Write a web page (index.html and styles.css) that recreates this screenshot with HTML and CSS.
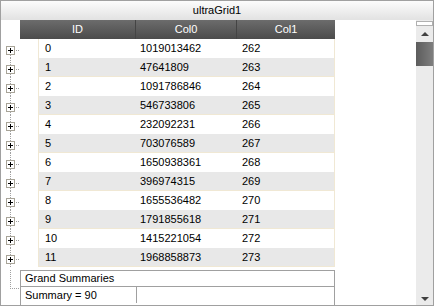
FILE: index.html
```html
<!DOCTYPE html>
<html lang="en">
<head>
    <meta charset="UTF-8">
    <title>ultraGrid1</title>
    <link rel="stylesheet" href="styles.css">
</head>
<body>

<div class="grid">
    <div class="caption">ultraGrid1</div>
    <div class="grid-body">
        <div class="grid-main">
            <div class="header-row">
                <div class="tree-blank"></div>
                <div class="hcell col-id">ID</div>
                <div class="hcell col-0">Col0</div>
                <div class="hcell col-1">Col1</div>
            </div>
            <div class="rows" id="rows">
                <!-- rows are added by the script below -->
            </div>
            <div class="summary-area">
                <svg class="tree" width="19" height="37" viewBox="0 0 19 37">
                    <line x1="9.5" y1="0" x2="9.5" y2="19" stroke="#a0a0a0" stroke-dasharray="1 1"/>
                    <line x1="11" y1="18.5" x2="19" y2="18.5" stroke="#a0a0a0" stroke-dasharray="1 1"/>
                </svg>
                <div class="summary-box">
                    <div class="summary-title">Grand Summaries</div>
                    <div class="summary-line">
                        <div class="summary-cell first">Summary = 90</div>
                        <div class="summary-cell"></div>
                    </div>
                </div>
            </div>
        </div>
        <div class="scrollbar">
            <div class="scroll-grip"></div>
            <div class="scroll-btn"><span class="arrow-up"></span></div>
            <div class="scroll-thumb"></div>
            <div class="scroll-track"></div>
            <div class="scroll-btn"><span class="arrow-down"></span></div>
        </div>
    </div>
</div>

<script>
    // Sample data shown in the grid
    const data = [
        [0, 1019013462, 262],
        [1, 47641809, 263],
        [2, 1091786846, 264],
        [3, 546733806, 265],
        [4, 232092231, 266],
        [5, 703076589, 267],
        [6, 1650938361, 268],
        [7, 396974315, 269],
        [8, 1655536482, 270],
        [9, 1791855618, 271],
        [10, 1415221054, 272],
        [11, 1968858873, 273]
    ];

    function treeIcon(first) {
        return `
            <svg class="tree" width="19" height="19" viewBox="0 0 19 19">
                ${first ? '' : '<line x1="9.5" y1="0" x2="9.5" y2="7" stroke="#a0a0a0" stroke-dasharray="1 1"/>'}
                <line x1="9.5" y1="16" x2="9.5" y2="19" stroke="#a0a0a0" stroke-dasharray="1 1"/>
                <line x1="15" y1="11.5" x2="19" y2="11.5" stroke="#a0a0a0" stroke-dasharray="1 1"/>
                <rect x="5.5" y="7.5" width="8" height="8" fill="#fff" stroke="#a8a498"/>
                <line x1="7" y1="11.5" x2="12" y2="11.5" stroke="#000"/>
                <line x1="9.5" y1="9" x2="9.5" y2="14" stroke="#000"/>
            </svg>`;
    }

    const rows = document.getElementById('rows');
    data.forEach((item, i) => {
        const row = document.createElement('div');
        row.className = 'row' + (i % 2 ? ' alt' : '');
        row.innerHTML = `
            ${treeIcon(i === 0)}
            <div class="row-gap"></div>
            <div class="cells">
                <div class="cell col-id">${item[0]}</div>
                <div class="cell col-0">${item[1]}</div>
                <div class="cell col-1">${item[2]}</div>
            </div>
        `;
        rows.appendChild(row);
    });
</script>

</body>
</html>
```

FILE: styles.css
```css
body {
    margin: 0;
    padding: 0;
    background-color: #fff;
    font-family: "Liberation Sans", Arial, sans-serif;
    font-size: 11px;
}
.grid {
    width: 434px;
    height: 306px;
    box-sizing: border-box;
    border: 1px solid #a0a0a0;
    display: flex;
    flex-direction: column;
    overflow: hidden;
}
.caption {
    height: 20px;
    line-height: 19px;
    text-align: center;
    color: #000;
    background: linear-gradient(#fcfcfc, #e2e2e2);
}
.grid-body {
    flex: 1;
    display: flex;
}
.grid-main {
    flex: 1;
    display: flex;
    flex-direction: column;
}
.header-row {
    display: flex;
    height: 19px;
}
.tree-blank {
    width: 19px;
}
.hcell {
    line-height: 19px;
    text-align: center;
    color: #fff;
    background: linear-gradient(#6c6c6c, #4b4b4b);
    box-sizing: border-box;
}
.header-row .col-id {
    width: 116px;
    border-right: 1px solid #444;
}
.header-row .col-0 {
    width: 101px;
    border-right: 1px solid #444;
}
.header-row .col-1 {
    width: 98px;
}
.rows {
    height: 228px;
}
.row {
    display: flex;
    height: 19px;
}
.tree {
    display: block;
    flex: none;
}
.row-gap {
    width: 18px;
}
.cells {
    display: flex;
    width: 297px;
    box-sizing: border-box;
    border-left: 1px solid #f0e8d4;
    border-right: 1px solid #f0e8d4;
}
.row.alt .cells {
    background-color: #e8e8e8;
    box-shadow: inset 0 -1px 0 #f0e8d4;
}
.cell {
    line-height: 19px;
    color: #000;
    box-sizing: border-box;
    white-space: nowrap;
}
.cells .col-id {
    width: 97px;
    padding-left: 6px;
}
.cells .col-0 {
    width: 101px;
    padding-left: 4px;
}
.cells .col-1 {
    width: 97px;
    padding-left: 5px;
}
.summary-area {
    display: flex;
    margin-top: 3px;
}
.summary-box {
    width: 315px;
    box-sizing: border-box;
    border: 1px solid #a0a0a0;
}
.summary-title {
    height: 15px;
    line-height: 15px;
    padding-left: 4px;
    border-bottom: 1px solid #a0a0a0;
}
.summary-line {
    display: flex;
    height: 16px;
    line-height: 16px;
}
.summary-cell.first {
    width: 116px;
    padding-left: 4px;
    box-sizing: border-box;
    border-right: 1px solid #a0a0a0;
}
.scrollbar {
    width: 17px;
    display: flex;
    flex-direction: column;
    background-color: #ebebeb;
}
.scroll-grip {
    height: 3px;
    margin-top: 1px;
    background-color: #fff;
    border: 1px solid #b0b0b0;
}
.scroll-btn {
    height: 16px;
    display: flex;
    align-items: center;
    justify-content: center;
}
.arrow-up {
    border-left: 4px solid transparent;
    border-right: 4px solid transparent;
    border-bottom: 4px solid #404040;
}
.arrow-down {
    border-left: 4px solid transparent;
    border-right: 4px solid transparent;
    border-top: 4px solid #404040;
}
.scroll-thumb {
    height: 24px;
    background: linear-gradient(to right, #5c5c5c, #7e7e7e);
}
.scroll-track {
    flex: 1;
}
```
